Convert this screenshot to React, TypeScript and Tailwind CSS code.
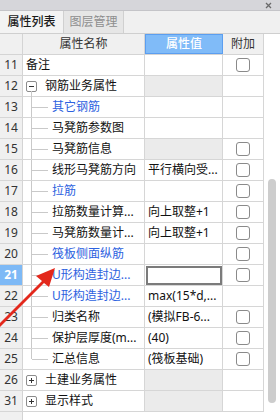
import React from "react";

type Row = {
  no: string;
  name: string;
  level: 0 | 1 | 2;
  blue?: boolean;
  toggle?: "-" | "+";
  value?: string;
  valueGray?: boolean;
  input?: boolean;
  check?: boolean;
  selected?: boolean;
  last?: boolean;
};

const rows: Row[] = [
  { no: "11", name: "备注", level: 0, check: true },
  { no: "12", name: "钢筋业务属性", level: 1, toggle: "-", valueGray: true },
  { no: "13", name: "其它钢筋", level: 2, blue: true },
  { no: "14", name: "马凳筋参数图", level: 2 },
  { no: "15", name: "马凳筋信息", level: 2, valueGray: true, check: true },
  { no: "16", name: "线形马凳筋方向", level: 2, value: "平行横向受...", check: true },
  { no: "17", name: "拉筋", level: 2, blue: true, check: true },
  { no: "18", name: "拉筋数量计算...", level: 2, value: "向上取整+1", check: true },
  { no: "19", name: "马凳筋数量计...", level: 2, value: "向上取整+1", check: true },
  { no: "20", name: "筏板侧面纵筋", level: 2, blue: true, check: true },
  { no: "21", name: "U形构造封边...", level: 2, blue: true, input: true, check: true, selected: true },
  { no: "22", name: "U形构造封边...", level: 2, blue: true, value: "max(15*d,..." },
  { no: "23", name: "归类名称", level: 2, value: "(模拟FB-6...", check: true },
  { no: "24", name: "保护层厚度(m...", level: 2, value: "(40)", check: true },
  { no: "25", name: "汇总信息", level: 2, value: "(筏板基础)", check: true, last: true },
  { no: "26", name: "土建业务属性", level: 1, toggle: "+", valueGray: true },
  { no: "31", name: "显示样式", level: 1, toggle: "+", valueGray: true },
];

const font = { fontFamily: '"Noto Sans", "Noto Sans CJK SC", sans-serif' };

const Checkbox = () => <div className="h-[14px] w-[14px] rounded-[3px] border border-[#8a8a8a] bg-white" />;

const Toggle = ({ sign }: { sign: "-" | "+" }) => (
  <div className="flex h-[11px] w-[11px] items-center justify-center rounded-[2px] border border-[#8c8c8c] bg-white">
    <div className="relative h-[1px] w-[5px] bg-[#333]">
      {sign === "+" && <div className="absolute left-[2px] top-[-2px] h-[5px] w-[1px] bg-[#333]" />}
    </div>
  </div>
);

const NameCell = ({ row }: { row: Row }) => {
  const color = row.blue ? "text-[#2d62e0]" : "text-[#111]";
  if (row.level === 0) {
    return <div className={`pl-[3px] ${color}`}>{row.name}</div>;
  }
  if (row.level === 1) {
    const showTail = row.toggle === "-";
    return (
      <div className="relative flex h-full items-center">
        {showTail && <div className="absolute left-[8px] top-[15px] h-[7px] w-[1px] bg-[#c9c9c9]" />}
        <div className="ml-[3px]">
          <Toggle sign={row.toggle!} />
        </div>
        <span className={`ml-[8px] ${color}`}>{row.name}</span>
      </div>
    );
  }
  return (
    <div className="relative flex h-full items-center">
      <div className={`absolute left-[8px] top-0 w-[1px] bg-[#c9c9c9] ${row.last ? "h-[10px]" : "h-full"}`} />
      <div className="ml-[9px] h-[1px] w-[16px] bg-[#c9c9c9]" />
      <span className={`ml-[4px] whitespace-nowrap ${color}`}>{row.name}</span>
    </div>
  );
};

export default function App() {
  return (
    <div className="relative flex h-[420px] w-[280px] flex-col overflow-hidden bg-white text-[12px] leading-none" style={font}>
      {/* title bar */}
      <div className="flex h-[11px] items-center justify-end border-b border-[#c4c4c8] bg-[#d6d6da] pr-[8px]">
        <svg width="7" height="7" viewBox="0 0 7 7">
          <path d="M1 1L6 6M6 1L1 6" stroke="#6a6a6a" strokeWidth="1.3" />
        </svg>
      </div>
      {/* tabs */}
      <div className="flex h-[23px] border-b border-[#cfcfcf] bg-[#f0f0f0]">
        <div className="flex w-[64px] items-center justify-center border-r border-[#d0d0d0] bg-[#f3f3f3] font-medium text-[#1a1a1a]">属性列表</div>
        <div className="flex w-[60px] items-center justify-center border-r border-[#d0d0d0] bg-[#e6e6e6] text-[#8e8e8e]">图层管理</div>
      </div>
      <div className="flex flex-1">
        {/* table */}
        <div className="flex w-[264px] flex-col">
          <div className="flex h-[21px] border-b border-[#d4d4d4] bg-[#f0f0f0] text-[#333]">
            <div className="w-[23px] border-r border-[#d4d4d4]" />
            <div className="flex w-[122px] items-center justify-center border-r border-[#d4d4d4]">属性名称</div>
            <div className="flex w-[78px] items-center justify-center border border-[#5b9ef0] bg-[#80bbf8] font-medium text-white">属性值</div>
            <div className="flex w-[41px] items-center justify-center border-r border-[#d4d4d4]">附加</div>
          </div>
          {rows.map((row) => (
            <div key={row.no} className="flex h-[21px] border-b border-[#d6d6d6]">
              <div
                className={`flex w-[23px] items-center justify-center border-r border-[#d4d4d4] ${
                  row.selected ? "bg-[#7db9f6] font-bold text-white" : "bg-[#f0f0f0] text-[#333]"
                }`}
              >
                {row.no}
              </div>
              <div className="flex w-[122px] items-center border-r border-[#d6d6d6]">
                <div className="flex h-full w-full items-center">
                  <NameCell row={row} />
                </div>
              </div>
              <div className={`flex w-[78px] items-center border-r border-[#d6d6d6] ${row.valueGray ? "bg-[#ebebeb]" : ""}`}>
                {row.input ? (
                  <div className="ml-[1px] h-[19px] w-[76px] border-2 border-[#7b7b7b] bg-white" />
                ) : (
                  <span className="whitespace-nowrap pl-[3px] text-[#111]">{row.value}</span>
                )}
              </div>
              <div className="flex w-[41px] items-center justify-center border-r border-[#d6d6d6]">{row.check && <Checkbox />}</div>
            </div>
          ))}
          <div className="flex flex-1">
            <div className="w-[23px] border-r border-[#d4d4d4] bg-[#f0f0f0]" />
            <div className="flex-1" />
          </div>
        </div>
        {/* scrollbar */}
        <div className="flex w-[16px] flex-col items-center pt-[145px]">
          <div className="h-[224px] w-[8px] rounded-[4px] bg-[#cdcdcd]" />
        </div>
      </div>
      {/* red arrow annotation */}
      <svg className="pointer-events-none absolute left-0 top-0" width="280" height="420" viewBox="0 0 280 420">
        <polygon points="55,268 49,287 44,283 -1,328 -3,326 42,281 36,276" fill="#e3281c" />
      </svg>
    </div>
  );
}
